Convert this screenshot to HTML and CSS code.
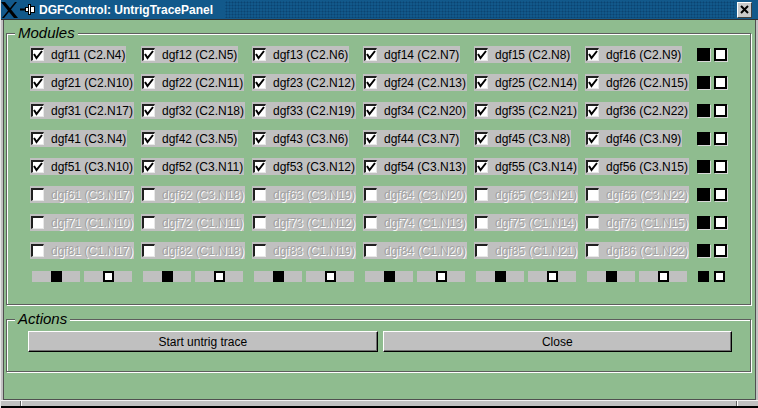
FILE: index.html
```html
<!DOCTYPE html>
<html>
<head>
<meta charset="utf-8">
<link rel="stylesheet" href="styles.css">
</head>
<body>
<div class="window">
  <div class="titlebar">
    <svg class="xlogo" width="17" height="16" viewBox="0 0 17 16">
      <polygon points="0,0 4,0 17,16 13,16" fill="#000"/>
      <polygon points="14,0 16,0 3,16 1,16" fill="#000"/>
    </svg>
    <svg class="pin" width="16" height="11" viewBox="0 0 16 11">
      <rect x="0" y="4.5" width="5" height="2" fill="#000"/>
      <rect x="5.5" y="3.5" width="3" height="4" fill="#fff" stroke="#000"/>
      <rect x="8.5" y="0.5" width="2" height="10" fill="#fff" stroke="#000"/>
      <rect x="10.5" y="2.5" width="4" height="6" fill="#fff" stroke="#000"/>
    </svg>
    <span class="title">DGFControl: UntrigTracePanel</span>
    <div class="dots"></div>
    <div class="close">
      <svg width="9" height="9" viewBox="0 0 9 9"><path d="M1 1 L8 8 M8 1 L1 8" stroke="#000" stroke-width="2"/></svg>
    </div>
  </div>

  <div class="client">
    <fieldset class="group modules">
      <legend>Modules</legend>
      <div class="grid">
        <label class="cell"><span class="cb on"><svg width="10" height="10" viewBox="0 0 10 10"><polyline points="1,4 3.5,8 9,1" /></svg></span>dgf11 (C2.N4)</label>
        <label class="cell"><span class="cb on"><svg width="10" height="10" viewBox="0 0 10 10"><polyline points="1,4 3.5,8 9,1" /></svg></span>dgf12 (C2.N5)</label>
        <label class="cell"><span class="cb on"><svg width="10" height="10" viewBox="0 0 10 10"><polyline points="1,4 3.5,8 9,1" /></svg></span>dgf13 (C2.N6)</label>
        <label class="cell"><span class="cb on"><svg width="10" height="10" viewBox="0 0 10 10"><polyline points="1,4 3.5,8 9,1" /></svg></span>dgf14 (C2.N7)</label>
        <label class="cell"><span class="cb on"><svg width="10" height="10" viewBox="0 0 10 10"><polyline points="1,4 3.5,8 9,1" /></svg></span>dgf15 (C2.N8)</label>
        <label class="cell"><span class="cb on"><svg width="10" height="10" viewBox="0 0 10 10"><polyline points="1,4 3.5,8 9,1" /></svg></span>dgf16 (C2.N9)</label>
        <div class="sqs"><span class="sq black"></span><span class="sq white"></span></div>

        <label class="cell"><span class="cb on"><svg width="10" height="10" viewBox="0 0 10 10"><polyline points="1,4 3.5,8 9,1" /></svg></span>dgf21 (C2.N10)</label>
        <label class="cell"><span class="cb on"><svg width="10" height="10" viewBox="0 0 10 10"><polyline points="1,4 3.5,8 9,1" /></svg></span>dgf22 (C2.N11)</label>
        <label class="cell"><span class="cb on"><svg width="10" height="10" viewBox="0 0 10 10"><polyline points="1,4 3.5,8 9,1" /></svg></span>dgf23 (C2.N12)</label>
        <label class="cell"><span class="cb on"><svg width="10" height="10" viewBox="0 0 10 10"><polyline points="1,4 3.5,8 9,1" /></svg></span>dgf24 (C2.N13)</label>
        <label class="cell"><span class="cb on"><svg width="10" height="10" viewBox="0 0 10 10"><polyline points="1,4 3.5,8 9,1" /></svg></span>dgf25 (C2.N14)</label>
        <label class="cell"><span class="cb on"><svg width="10" height="10" viewBox="0 0 10 10"><polyline points="1,4 3.5,8 9,1" /></svg></span>dgf26 (C2.N15)</label>
        <div class="sqs"><span class="sq black"></span><span class="sq white"></span></div>

        <label class="cell"><span class="cb on"><svg width="10" height="10" viewBox="0 0 10 10"><polyline points="1,4 3.5,8 9,1" /></svg></span>dgf31 (C2.N17)</label>
        <label class="cell"><span class="cb on"><svg width="10" height="10" viewBox="0 0 10 10"><polyline points="1,4 3.5,8 9,1" /></svg></span>dgf32 (C2.N18)</label>
        <label class="cell"><span class="cb on"><svg width="10" height="10" viewBox="0 0 10 10"><polyline points="1,4 3.5,8 9,1" /></svg></span>dgf33 (C2.N19)</label>
        <label class="cell"><span class="cb on"><svg width="10" height="10" viewBox="0 0 10 10"><polyline points="1,4 3.5,8 9,1" /></svg></span>dgf34 (C2.N20)</label>
        <label class="cell"><span class="cb on"><svg width="10" height="10" viewBox="0 0 10 10"><polyline points="1,4 3.5,8 9,1" /></svg></span>dgf35 (C2.N21)</label>
        <label class="cell"><span class="cb on"><svg width="10" height="10" viewBox="0 0 10 10"><polyline points="1,4 3.5,8 9,1" /></svg></span>dgf36 (C2.N22)</label>
        <div class="sqs"><span class="sq black"></span><span class="sq white"></span></div>

        <label class="cell"><span class="cb on"><svg width="10" height="10" viewBox="0 0 10 10"><polyline points="1,4 3.5,8 9,1" /></svg></span>dgf41 (C3.N4)</label>
        <label class="cell"><span class="cb on"><svg width="10" height="10" viewBox="0 0 10 10"><polyline points="1,4 3.5,8 9,1" /></svg></span>dgf42 (C3.N5)</label>
        <label class="cell"><span class="cb on"><svg width="10" height="10" viewBox="0 0 10 10"><polyline points="1,4 3.5,8 9,1" /></svg></span>dgf43 (C3.N6)</label>
        <label class="cell"><span class="cb on"><svg width="10" height="10" viewBox="0 0 10 10"><polyline points="1,4 3.5,8 9,1" /></svg></span>dgf44 (C3.N7)</label>
        <label class="cell"><span class="cb on"><svg width="10" height="10" viewBox="0 0 10 10"><polyline points="1,4 3.5,8 9,1" /></svg></span>dgf45 (C3.N8)</label>
        <label class="cell"><span class="cb on"><svg width="10" height="10" viewBox="0 0 10 10"><polyline points="1,4 3.5,8 9,1" /></svg></span>dgf46 (C3.N9)</label>
        <div class="sqs"><span class="sq black"></span><span class="sq white"></span></div>

        <label class="cell"><span class="cb on"><svg width="10" height="10" viewBox="0 0 10 10"><polyline points="1,4 3.5,8 9,1" /></svg></span>dgf51 (C3.N10)</label>
        <label class="cell"><span class="cb on"><svg width="10" height="10" viewBox="0 0 10 10"><polyline points="1,4 3.5,8 9,1" /></svg></span>dgf52 (C3.N11)</label>
        <label class="cell"><span class="cb on"><svg width="10" height="10" viewBox="0 0 10 10"><polyline points="1,4 3.5,8 9,1" /></svg></span>dgf53 (C3.N12)</label>
        <label class="cell"><span class="cb on"><svg width="10" height="10" viewBox="0 0 10 10"><polyline points="1,4 3.5,8 9,1" /></svg></span>dgf54 (C3.N13)</label>
        <label class="cell"><span class="cb on"><svg width="10" height="10" viewBox="0 0 10 10"><polyline points="1,4 3.5,8 9,1" /></svg></span>dgf55 (C3.N14)</label>
        <label class="cell"><span class="cb on"><svg width="10" height="10" viewBox="0 0 10 10"><polyline points="1,4 3.5,8 9,1" /></svg></span>dgf56 (C3.N15)</label>
        <div class="sqs"><span class="sq black"></span><span class="sq white"></span></div>

        <label class="cell off"><span class="cb"></span>dgf61 (C3.N17)</label>
        <label class="cell off"><span class="cb"></span>dgf62 (C3.N18)</label>
        <label class="cell off"><span class="cb"></span>dgf63 (C3.N19)</label>
        <label class="cell off"><span class="cb"></span>dgf64 (C3.N20)</label>
        <label class="cell off"><span class="cb"></span>dgf65 (C3.N21)</label>
        <label class="cell off"><span class="cb"></span>dgf66 (C3.N22)</label>
        <div class="sqs"><span class="sq black"></span><span class="sq white"></span></div>

        <label class="cell off"><span class="cb"></span>dgf71 (C1.N10)</label>
        <label class="cell off"><span class="cb"></span>dgf72 (C1.N11)</label>
        <label class="cell off"><span class="cb"></span>dgf73 (C1.N12)</label>
        <label class="cell off"><span class="cb"></span>dgf74 (C1.N13)</label>
        <label class="cell off"><span class="cb"></span>dgf75 (C1.N14)</label>
        <label class="cell off"><span class="cb"></span>dgf76 (C1.N15)</label>
        <div class="sqs"><span class="sq black"></span><span class="sq white"></span></div>

        <label class="cell off"><span class="cb"></span>dgf81 (C1.N17)</label>
        <label class="cell off"><span class="cb"></span>dgf82 (C1.N18)</label>
        <label class="cell off"><span class="cb"></span>dgf83 (C1.N19)</label>
        <label class="cell off"><span class="cb"></span>dgf84 (C1.N20)</label>
        <label class="cell off"><span class="cb"></span>dgf85 (C1.N21)</label>
        <label class="cell off"><span class="cb"></span>dgf86 (C1.N22)</label>
        <div class="sqs"><span class="sq black"></span><span class="sq white"></span></div>

        <div class="toggles"><span class="bar"><span class="dot black"></span></span><span class="bar"><span class="dot white"></span></span></div>
        <div class="toggles"><span class="bar"><span class="dot black"></span></span><span class="bar"><span class="dot white"></span></span></div>
        <div class="toggles"><span class="bar"><span class="dot black"></span></span><span class="bar"><span class="dot white"></span></span></div>
        <div class="toggles"><span class="bar"><span class="dot black"></span></span><span class="bar"><span class="dot white"></span></span></div>
        <div class="toggles"><span class="bar"><span class="dot black"></span></span><span class="bar"><span class="dot white"></span></span></div>
        <div class="toggles"><span class="bar"><span class="dot black"></span></span><span class="bar"><span class="dot white"></span></span></div>
        <div class="toggles end"><span class="dot black"></span><span class="dot white"></span></div>
      </div>
    </fieldset>

    <fieldset class="group actions">
      <legend>Actions</legend>
      <div class="buttons">
        <button class="btn">Start untrig trace</button>
        <button class="btn">Close</button>
      </div>
    </fieldset>
  </div>

  <div class="bottom-bar">
    <span class="seg first"></span>
    <span class="seg mid"></span>
    <span class="seg last"></span>
  </div>
</div>
</body>
</html>
```

FILE: styles.css
```css
html, body {
  margin: 0;
  padding: 0;
  background: #c0c0c0;
}

body {
  font-family: "Liberation Sans", Arial, sans-serif;
  font-size: 12px;
  color: #000;
}

.window {
  width: 758px;
  height: 408px;
  display: flex;
  flex-direction: column;
  background: #c0c0c0;
  overflow: hidden;
  box-sizing: border-box;
  border-left: 1px solid #e8e8e8;
}

/* ---------- title bar ---------- */
.titlebar {
  height: 19px;
  flex: none;
  display: flex;
  align-items: center;
  background: #12598b;
  border-bottom: 1px solid #303030;
  margin-left: -1px;
}

.xlogo {
  margin-left: 1px;
  flex: none;
}

.pin {
  margin-left: 2px;
  flex: none;
}

.title {
  margin-left: 3px;
  color: #fff;
  font-weight: bold;
  font-size: 12px;
  white-space: nowrap;
}

.dots {
  flex: 1;
  align-self: stretch;
  margin: 1px 2px 1px 12px;
  background-image: radial-gradient(circle, #0b4471 0.9px, transparent 1.1px);
  background-size: 3px 3px;
}

.close {
  width: 15px;
  height: 16px;
  box-sizing: border-box;
  margin-right: 6px;
  background: #cacaca;
  border: 1px solid;
  border-color: #fff #404040 #404040 #fff;
  display: flex;
  align-items: center;
  justify-content: center;
}

/* ---------- client ---------- */
.client {
  flex: 1;
  display: flex;
  flex-direction: column;
  background: #8fbc8f;
  margin-left: 2px;
  margin-right: 2px;
  border-left: 1px solid #505050;
  border-right: 1px solid #505050;
  border-bottom: 1px solid #505050;
  padding: 5px 4px 0 2px;
}

.group {
  margin: 0;
  padding: 0 4px 17px 8px;
  border: 1px solid #5e5e5e;
  box-shadow: inset 1px 1px 0 #fff, 1px 1px 0 #fff;
  min-width: 0;
}

.group legend {
  padding: 0 3px;
  font-style: italic;
  font-size: 15px;
  line-height: 16px;
  background: #8fbc8f;
  color: #000;
}

.actions {
  margin-top: 6px;
  padding-bottom: 19px;
}

/* ---------- module grid ---------- */
.grid {
  display: grid;
  grid-template-columns: repeat(6, 111px) auto;
  grid-auto-rows: 17px;
  row-gap: 11px;
  margin: 5px 0 0 15px;
}

.cell {
  justify-self: start;
  display: inline-flex;
  align-items: center;
  height: 17px;
  background: #c0c0c0;
  padding: 0 1px 0 1px;
  white-space: nowrap;
  color: #000;
}

.cell.off {
  color: #a2a2a2;
  text-shadow: 1px 1px 0 #fff;
}

.cb {
  width: 13px;
  height: 13px;
  box-sizing: border-box;
  flex: none;
  background: #fff;
  border-style: solid;
  border-width: 2px 1px 1px 2px;
  border-color: #202020 #e8e8e8 #e8e8e8 #202020;
  margin-right: 7px;
  display: flex;
  align-items: center;
  justify-content: center;
}

.cb svg polyline {
  fill: none;
  stroke: #000;
  stroke-width: 2;
}

.sqs {
  display: flex;
  align-items: center;
  gap: 4px;
  padding-left: 1px;
}

.sq {
  width: 13px;
  height: 13px;
  box-sizing: border-box;
  box-shadow: 1px 1px 0 #d8d8d8;
}

.sq.black {
  background: #000;
}

.sq.white {
  background: #fff;
  border: 2px solid #000;
}

.toggles {
  display: flex;
  gap: 4px;
  height: 11px;
  margin-top: 1px;
  padding-left: 2px;
}

.toggles.end {
  gap: 5px;
}

.bar {
  width: 48px;
  height: 11px;
  background: #c0c0c0;
  display: flex;
  justify-content: center;
}

.dot {
  width: 11px;
  height: 11px;
  box-sizing: border-box;
}

.dot.black {
  background: #000;
}

.dot.white {
  background: #fff;
  border: 2px solid #000;
}

/* ---------- buttons ---------- */
.buttons {
  display: flex;
  gap: 5px;
  margin: 4px 14px 0 13px;
}

.btn {
  flex: 1;
  height: 21px;
  margin: 0;
  padding: 0;
  font-family: "Liberation Sans", Arial, sans-serif;
  font-size: 12px;
  color: #000;
  background: #c0c0c0;
  border: 1px solid;
  border-color: #fff #000 #000 #fff;
  box-shadow: inset -1px -1px 0 #707070;
}

/* ---------- bottom frame ---------- */
.bottom-bar {
  height: 5px;
  flex: none;
  display: flex;
  border-top: 1px solid #f0f0f0;
  border-bottom: 2px solid #000;
  margin-left: -1px;
}

.seg {
  height: 5px;
}

.seg.first {
  width: 20px;
  border-right: 1px solid #606060;
}

.seg.mid {
  flex: 1;
  border-left: 1px solid #fff;
  border-right: 1px solid #606060;
}

.seg.last {
  width: 20px;
  border-left: 1px solid #fff;
}
```
